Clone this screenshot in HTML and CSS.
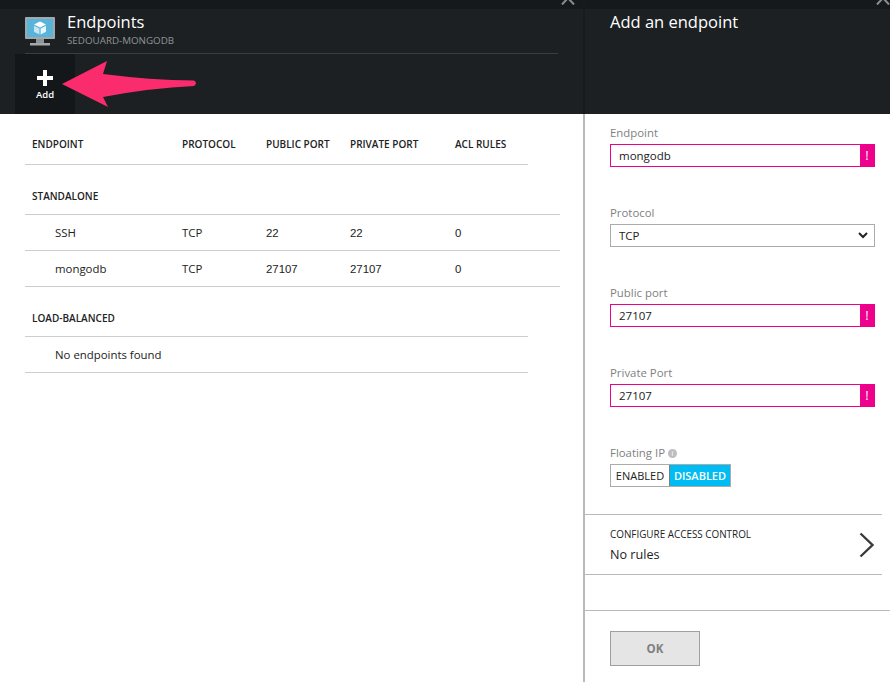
FILE: index.html
```html
<!DOCTYPE html>
<html lang="en">
<head>
    <meta charset="UTF-8">
    <title>Endpoints</title>
    <link rel="stylesheet" href="styles.css">
</head>
<body>
    <div class="page">
        <section class="blade blade-left">
            <header class="head">
                <svg class="close-mark" width="14" height="5" viewBox="0 0 14 5"><path d="M7 -2 L1 4.5 M7 -2 L13 4.5" fill="none" stroke="#8b8e90" stroke-width="2"/></svg>
                <div class="title-row">
                    <svg class="vm-icon" width="30" height="30" viewBox="0 0 30 30">
                        <rect x="0" y="0" width="30" height="22" rx="1" fill="#a3a8ab"/>
                        <rect x="2" y="2" width="26" height="18" fill="#59b4d9"/>
                        <rect x="11" y="22" width="8" height="4" fill="#8f9497"/>
                        <rect x="5" y="26" width="20" height="2.5" fill="#a3a8ab"/>
                        <path d="M15 4.5 L21 7.5 L15 10.5 L9 7.5 Z" fill="#fff"/>
                        <path d="M9 8.7 L14.4 11.4 L14.4 17.5 L9 14.8 Z" fill="#c5e5f2"/>
                        <path d="M21 8.7 L15.6 11.4 L15.6 17.5 L21 14.8 Z" fill="#e9f5fa"/>
                    </svg>
                    <div>
                        <h1 class="title">Endpoints</h1>
                        <div class="subtitle">SEDOUARD-MONGODB</div>
                    </div>
                </div>
                <div class="command-bar">
                    <div class="command">
                        <svg width="16" height="16" viewBox="0 0 16 16"><path d="M6 0h4v6h6v4h-6v6H6v-6H0V6h6z" fill="#fff"/></svg>
                        <span>Add</span>
                    </div>
                </div>
            </header>
            <div class="grid">
                <div class="row row-head">
                    <div class="col-name">ENDPOINT</div>
                    <div class="col-proto">PROTOCOL</div>
                    <div class="col-port">PUBLIC PORT</div>
                    <div class="col-priv">PRIVATE PORT</div>
                    <div>ACL RULES</div>
                </div>
                <div class="row row-group row-wide">STANDALONE</div>
                <div class="row row-item row-wide">
                    <div class="col-name item-name">SSH</div>
                    <div class="col-proto">TCP</div>
                    <div class="col-port num">22</div>
                    <div class="col-priv num">22</div>
                    <div class="num">0</div>
                </div>
                <div class="row row-item row-wide">
                    <div class="col-name item-name">mongodb</div>
                    <div class="col-proto">TCP</div>
                    <div class="col-port num">27107</div>
                    <div class="col-priv num">27107</div>
                    <div class="num">0</div>
                </div>
                <div class="row row-group">LOAD-BALANCED</div>
                <div class="row row-item">
                    <div class="item-name">No endpoints found</div>
                </div>
            </div>
        </section>

        <section class="blade blade-right">
            <header class="head">
                <svg class="close-mark" width="14" height="5" viewBox="0 0 14 5"><path d="M7 -2 L1 4.5 M7 -2 L13 4.5" fill="none" stroke="#8b8e90" stroke-width="2"/></svg>
                <h2 class="title title-right">Add an endpoint</h2>
            </header>
            <form class="form">
                <div class="field">
                    <label>Endpoint</label>
                    <div class="input invalid"><span>mongodb</span><b>!</b></div>
                </div>
                <div class="field">
                    <label>Protocol</label>
                    <div class="input">
                        <span>TCP</span>
                        <svg class="caret" width="10" height="7" viewBox="0 0 10 7"><path d="M1 1 L5 5 L9 1" fill="none" stroke="#222" stroke-width="2"/></svg>
                    </div>
                </div>
                <div class="field">
                    <label>Public port</label>
                    <div class="input invalid"><span>27107</span><b>!</b></div>
                </div>
                <div class="field">
                    <label>Private Port</label>
                    <div class="input invalid"><span>27107</span><b>!</b></div>
                </div>
                <div class="field">
                    <label>Floating IP <i class="info">i</i></label>
                    <div class="toggle">
                        <div class="toggle-off">ENABLED</div>
                        <div class="toggle-on">DISABLED</div>
                    </div>
                </div>
            </form>
            <div class="nav-row">
                <div class="nav-text">
                    <div class="nav-label">CONFIGURE ACCESS CONTROL</div>
                    <div class="nav-value">No rules</div>
                </div>
                <svg width="16" height="26" viewBox="0 0 16 26"><path d="M1.5 1.5 L13.5 13 L1.5 24.5" fill="none" stroke="#3a3a3a" stroke-width="2.4"/></svg>
            </div>
            <div class="footer">
                <div class="ok-button">OK</div>
            </div>
        </section>
    </div>

    <svg class="arrow" width="140" height="50" viewBox="60 60 140 50">
        <path d="M62 84 L107 61 L103 74 Q150 80 194 80.5 Q198 83 194 86 Q150 88 103 97 L108 107 Z" fill="#fb2c6d"/>
    </svg>
</body>
</html>
```

FILE: styles.css
```css
body {
    margin: 0;
    background-color: white;
    font-family: "Open Sans", Arial, sans-serif;
    color: #222;
    overflow: hidden;
}
.page {
    display: flex;
    height: 682px;
    overflow: hidden;
}
.blade {
    position: relative;
    height: 682px;
}
.blade-left {
    width: 583px;
    flex-shrink: 0;
}
.blade-right {
    flex: 1;
    border-left: 2px solid #b9b9b9;
}
.head {
    position: relative;
    height: 105px;
    padding-top: 9px;
    background: linear-gradient(#16191b 9px, #1c2022 9px);
}
.blade-right .head {
    margin-left: -2px;
    border-left: 2px solid #181b1d;
}
.close-mark {
    display: block;
    position: absolute;
    top: 0;
    right: 8px;
}
.blade-right .close-mark {
    right: 0;
}
.title-row {
    display: flex;
    gap: 12px;
    height: 44px;
    margin: 0 25px;
    border-bottom: 1px solid #3a3e40;
}
.vm-icon {
    margin-top: 8px;
}
.title {
    margin: 0;
    padding-top: 2px;
    font-size: 16.5px;
    line-height: 22px;
    font-weight: 400;
    color: white;
}
.title-right {
    padding-left: 25px;
}
.subtitle {
    font-size: 9.8px;
    line-height: 12px;
    margin-top: 2px;
    color: #8f9496;
}
.command-bar {
    margin-left: 15px;
}
.command {
    display: flex;
    flex-direction: column;
    align-items: center;
    width: 60px;
    height: 60px;
    padding-top: 16px;
    box-sizing: border-box;
    background-color: #141719;
    color: white;
    font-size: 9.5px;
    font-weight: 600;
    line-height: 12px;
}
.command span {
    margin-top: 3px;
}
.grid {
    margin-left: 25px;
    width: 503px;
}
.row {
    display: flex;
    align-items: center;
    box-sizing: border-box;
    padding-left: 7px;
    border-bottom: 1px solid #cdcdcd;
    font-size: 11.4px;
}
.row-wide {
    width: 535px;
}
.row-head {
    height: 51px;
    padding-top: 10px;
    font-size: 10px;
    font-weight: 600;
}
.row-group {
    height: 50px;
    padding-top: 12px;
    font-size: 10px;
    font-weight: 600;
}
.row-item {
    height: 36px;
}
.col-name {
    width: 150px;
}
.item-name {
    padding-left: 23px;
    box-sizing: border-box;
}
.col-proto,
.col-port {
    width: 84px;
}
.col-priv {
    width: 105px;
}
.num {
    font-family: "Liberation Sans", Arial, sans-serif;
}
.form {
    padding: 9px 15px 0 25px;
}
.field {
    height: 80px;
}
.field label {
    display: block;
    height: 21px;
    font-size: 11.4px;
    line-height: 19px;
    color: #7f7f7f;
}
.input {
    display: flex;
    align-items: center;
    justify-content: space-between;
    box-sizing: border-box;
    height: 23px;
    padding-left: 8px;
    border: 1px solid #ababab;
    font-size: 11.5px;
}
.input.invalid {
    border-color: #ec008c;
}
.input b {
    width: 14px;
    height: 100%;
    background-color: #ec008c;
    color: white;
    text-align: center;
    line-height: 21px;
    font-size: 13px;
    font-weight: 400;
}
.caret {
    margin-right: 6px;
}
.info {
    display: inline-block;
    width: 9px;
    height: 9px;
    border-radius: 50%;
    background-color: #bdbdbd;
    color: white;
    font-size: 7px;
    line-height: 9px;
    text-align: center;
    font-style: normal;
    vertical-align: 1px;
}
.toggle {
    display: flex;
    box-sizing: border-box;
    width: 121px;
    height: 23px;
    border: 1px solid #ababab;
    font-size: 11px;
    line-height: 21px;
    text-align: center;
}
.toggle-off {
    width: 58px;
}
.toggle-on {
    flex: 1;
    background-color: #00bcf2;
    color: white;
    font-weight: 600;
    border-left: 1px solid #7f7f7f;
}
.nav-row {
    display: flex;
    align-items: center;
    justify-content: space-between;
    box-sizing: border-box;
    width: 297px;
    height: 61px;
    margin-top: -9px;
    padding: 1px 7px 0 25px;
    border-top: 1px solid #b9b9b9;
    border-bottom: 1px solid #b9b9b9;
}
.nav-text {
    padding-top: 1px;
}
.nav-label {
    font-size: 9.9px;
    line-height: 13px;
}
.nav-value {
    margin-top: 6px;
    font-size: 12.6px;
    line-height: 16px;
}
.footer {
    margin-top: 35px;
    padding: 20px 0 0 25px;
    border-top: 1px solid #b9b9b9;
}
.ok-button {
    box-sizing: border-box;
    width: 90px;
    height: 35px;
    border: 1px solid #a0a0a0;
    background-color: #e5e5e5;
    color: #7f7f7f;
    font-size: 11.5px;
    font-weight: 700;
    line-height: 33px;
    text-align: center;
}
.arrow {
    position: absolute;
    left: 60px;
    top: 60px;
}
```
